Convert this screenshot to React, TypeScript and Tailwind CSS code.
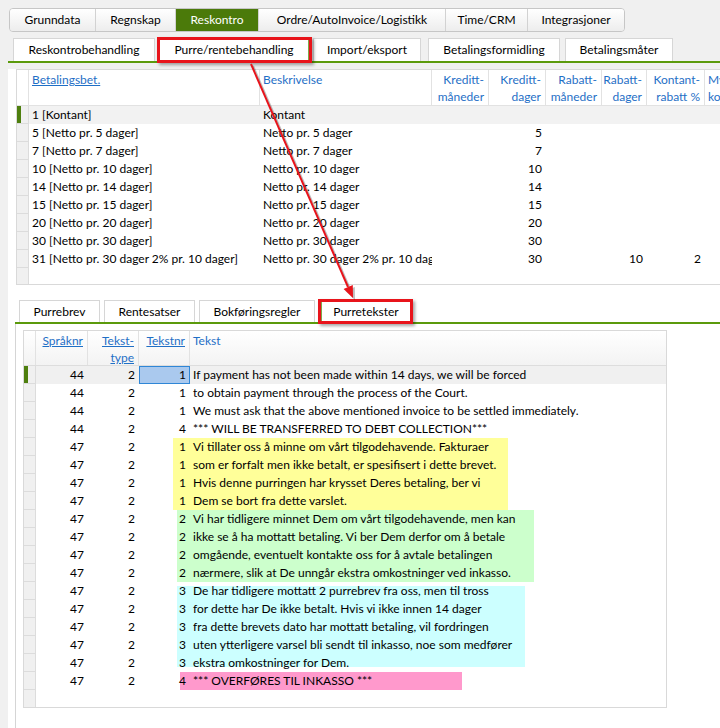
import clsx from "clsx";

const topTabs = [
  { label: "Grunndata", w: "w-[85px]" },
  { label: "Regnskap", w: "w-[80px]" },
  { label: "Reskontro", w: "w-[83px]", active: true },
  { label: "Ordre/AutoInvoice/Logistikk", w: "w-[187px]" },
  { label: "Time/CRM", w: "w-[82px]" },
  { label: "Integrasjoner", w: "w-[97px]" },
];

const subTabs = [
  { label: "Reskontrobehandling", w: "w-[142px]", ml: "" },
  { label: "Purre/rentebehandling", w: "w-[150px]", ml: "ml-1", active: true },
  { label: "Import/eksport", w: "w-[108px]", ml: "ml-1" },
  { label: "Betalingsformidling", w: "w-[132px]", ml: "ml-[7px]" },
  { label: "Betalingsmåter", w: "w-[108px]", ml: "ml-[5px]" },
];

const lowerTabs = [
  { label: "Purrebrev", w: "w-[81px]", ml: "" },
  { label: "Rentesatser", w: "w-[91px]", ml: "ml-1" },
  { label: "Bokføringsregler", w: "w-[116px]", ml: "ml-1" },
  { label: "Purretekster", w: "w-[90px]", ml: "ml-[6px]", active: true },
];

const payCols = [
  { l: ["Betalingsbet."], w: "w-[231px]", right: false, link: true },
  { l: ["Beskrivelse"], w: "w-[172px]", right: false },
  { l: ["Kreditt-", "måneder"], w: "w-[57px]", right: true },
  { l: ["Kreditt-", "dager"], w: "w-[57px]", right: true },
  { l: ["Rabatt-", "måneder"], w: "w-[56px]", right: true },
  { l: ["Rabatt-", "dager"], w: "w-[45px]", right: true },
  { l: ["Kontant-", "rabatt %"], w: "w-[58px]", right: true },
  { l: ["Mva-", "kode"], w: "w-[60px]", right: false },
];

const payRows = [
  ["1 [Kontant]", "Kontant", "", "", "", "", "", ""],
  ["5 [Netto pr. 5 dager]", "Netto pr. 5 dager", "", "5", "", "", "", ""],
  ["7 [Netto pr. 7 dager]", "Netto pr. 7 dager", "", "7", "", "", "", ""],
  ["10 [Netto pr. 10 dager]", "Netto pr. 10 dager", "", "10", "", "", "", ""],
  ["14 [Netto pr. 14 dager]", "Netto pr. 14 dager", "", "14", "", "", "", ""],
  ["15 [Netto pr. 15 dager]", "Netto pr. 15 dager", "", "15", "", "", "", ""],
  ["20 [Netto pr. 20 dager]", "Netto pr. 20 dager", "", "20", "", "", "", ""],
  ["30 [Netto pr. 30 dager]", "Netto pr. 30 dager", "", "30", "", "", "", ""],
  ["31 [Netto pr. 30 dager 2% pr. 10 dager]", "Netto pr. 30 dager 2% pr. 10 dager", "", "30", "", "10", "2", ""],
];

const Y = "left-[149px] w-[335px] top-0 bottom-0 bg-[#ffff99]";
const G = "left-[153px] w-[357px] top-0 bottom-0 bg-[#ccffcc]";
const C = "left-[153px] w-[348px] top-0 bottom-0 bg-[#ccffff]";

const textRows = [
  { s: "44", t: "2", n: "1", x: "If payment has not been made within 14 days, we will be forced" },
  { s: "44", t: "2", n: "1", x: "to obtain payment through the process of the Court." },
  { s: "44", t: "2", n: "1", x: "We must ask that the above mentioned invoice to be settled immediately." },
  { s: "44", t: "2", n: "4", x: "*** WILL BE TRANSFERRED TO DEBT COLLECTION***" },
  { s: "47", t: "2", n: "1", x: "Vi tillater oss å minne om vårt tilgodehavende. Fakturaer", hl: Y },
  { s: "47", t: "2", n: "1", x: "som er forfalt men ikke betalt, er spesifisert i dette brevet.", hl: Y },
  { s: "47", t: "2", n: "1", x: "Hvis denne purringen har krysset Deres betaling, ber vi", hl: Y },
  { s: "47", t: "2", n: "1", x: "Dem se bort fra dette varslet.", hl: Y },
  { s: "47", t: "2", n: "2", x: "Vi har tidligere minnet Dem om vårt tilgodehavende, men kan", hl: G },
  { s: "47", t: "2", n: "2", x: "ikke se å ha mottatt betaling. Vi ber Dem derfor om å betale", hl: G },
  { s: "47", t: "2", n: "2", x: "omgående, eventuelt kontakte oss for å avtale betalingen", hl: G },
  { s: "47", t: "2", n: "2", x: "nærmere, slik at De unngår ekstra omkostninger ved inkasso.", hl: G },
  { s: "47", t: "2", n: "3", x: "De har tidligere mottatt 2 purrebrev fra oss, men til tross", hl: "left-[153px] w-[348px] top-[4px] bottom-0 bg-[#ccffff]" },
  { s: "47", t: "2", n: "3", x: "for dette har De ikke betalt. Hvis vi ikke innen 14 dager", hl: C },
  { s: "47", t: "2", n: "3", x: "fra dette brevets dato har mottatt betaling, vil fordringen", hl: C },
  { s: "47", t: "2", n: "3", x: "uten ytterligere varsel bli sendt til inkasso, noe som medfører", hl: C },
  { s: "47", t: "2", n: "3", x: "ekstra omkostninger for Dem.", hl: "left-[153px] w-[348px] top-0 bottom-[5px] bg-[#ccffff]" },
  { s: "47", t: "2", n: "4", x: "*** OVERFØRES TIL INKASSO ***", hl: "left-[156px] w-[282px] top-0 bottom-0 bg-[#ff99cc]" },
];

function TopTabs() {
  return (
    <div className="flex pl-[9px] pt-2">
      <div className="flex h-6 overflow-hidden rounded-[4px] border border-[#c6c6c6]">
        {topTabs.map((t, i) => (
          <div
            key={t.label}
            className={clsx(
              "flex items-center justify-center",
              t.w,
              i > 0 && "border-l border-[#d2d2d2]",
              t.active ? "bg-[#4b7a0a] text-white" : "bg-gradient-to-b from-white to-[#ededed]"
            )}
          >
            {t.label}
          </div>
        ))}
      </div>
    </div>
  );
}

function TabRow({ tabs, h }: { tabs: typeof subTabs; h: string }) {
  return (
    <div className="flex">
      {tabs.map((t) => (
        <div
          key={t.label}
          className={clsx(
            "flex items-center justify-center border-x border-t bg-white",
            t.w,
            t.ml,
            h,
            t.active ? "border-[#7ea84a]" : "border-[#d6d6d6]"
          )}
        >
          {t.label}
        </div>
      ))}
    </div>
  );
}

function PaymentGrid() {
  return (
    <div className="ml-2 mt-[6px] flex h-[216px] w-[720px] flex-col border border-[#d9d9d9]">
      <div className="flex h-9 border-b border-[#e2e2e2]">
        <div className="w-3 shrink-0 border-r border-[#e2e2e2]" />
        {payCols.map((c) => (
          <div
            key={c.l[0]}
            className={clsx(
              "shrink-0 border-r border-[#e2e2e2] pt-[1px] leading-[17px] text-[#1f6fc6]",
              c.w,
              c.right ? "pr-1 text-right" : "pl-[3px]"
            )}
          >
            {c.l.map((s) => (
              <div key={s} className={clsx("whitespace-nowrap", c.link && "underline")}>
                {s}
              </div>
            ))}
          </div>
        ))}
      </div>
      {payRows.map((r, i) => (
        <div key={r[0]} className={clsx("flex h-[18px] leading-[18px]", i === 0 && "bg-[#f2f2f2]")}>
          <div className="flex w-3 shrink-0 border-r border-b border-[#dcdcdc] bg-[#f0f0f0]">
            {i === 0 && <div className="w-1 bg-[#4e7f0e]" />}
          </div>
          {r.map((v, j) => (
            <div
              key={j}
              className={clsx(
                "shrink-0 overflow-hidden whitespace-nowrap",
                payCols[j].w,
                payCols[j].right ? "pr-1 text-right" : "pl-[3px]",
                j === 1 && "pr-1"
              )}
            >
              {v}
            </div>
          ))}
        </div>
      ))}
      <div className="flex flex-1">
        <div className="w-3 shrink-0 border-r border-[#dcdcdc] bg-[#f0f0f0]" />
      </div>
    </div>
  );
}

function TextGrid() {
  return (
    <div className="flex h-[378px] w-[644px] flex-col border border-[#d9d9d9]">
      <div className="flex h-[35px] border-b border-[#dddddd] bg-gradient-to-b from-white to-[#f3f3f3] leading-[17px] text-[#1f6fc6]">
        <div className="w-3 shrink-0 border-r border-[#e2e2e2]" />
        <div className="w-[52px] shrink-0 border-r border-[#e2e2e2] pr-1 pt-[1px] text-right underline">Språknr</div>
        <div className="w-[51px] shrink-0 border-r border-[#e2e2e2] pr-1 pt-[1px] text-right underline">
          <div>Tekst-</div>
          <div>type</div>
        </div>
        <div className="w-[51px] shrink-0 border-r border-[#e2e2e2] pr-1 pt-[1px] text-right underline">Tekstnr</div>
        <div className="pl-[3px] pt-[1px]">Tekst</div>
      </div>
      {textRows.map((r, i) => (
        <div key={i} className={clsx("relative flex h-[18px] leading-[18px]", i === 0 && "bg-[#f0f0f0]")}>
          {r.hl && <div className={clsx("absolute", r.hl)} />}
          <div className="relative flex w-3 shrink-0 border-r border-b border-[#dcdcdc] bg-[#f0f0f0]">
            {i === 0 && <div className="w-1 bg-[#4e7f0e]" />}
          </div>
          <div className="relative w-[52px] shrink-0 pr-1 text-right">{r.s}</div>
          <div className="relative w-[51px] shrink-0 pr-1 text-right">{r.t}</div>
          <div
            className={clsx(
              "relative w-[51px] shrink-0 text-right",
              i === 0 ? "border border-[#2f86d6] bg-[#aac9ee] pr-[3px] leading-[16px]" : "pr-1"
            )}
          >
            {r.n}
          </div>
          <div className="relative whitespace-nowrap pl-[3px]">{r.x}</div>
        </div>
      ))}
      <div className="flex flex-1">
        <div className="w-3 shrink-0 border-r border-[#dcdcdc] bg-[#f0f0f0]" />
      </div>
    </div>
  );
}

function Annotations() {
  return (
    <>
      <div className="absolute left-[157px] top-[37px] h-[26px] w-[155px] border-[3px] border-[#e8141b] shadow-[2px_2px_3px_rgba(0,0,0,0.35)]" />
      <div className="absolute left-[318px] top-[299px] h-[25px] w-[95px] border-[3px] border-[#e8141b] shadow-[2px_2px_3px_rgba(0,0,0,0.35)]" />
      <svg className="pointer-events-none absolute left-0 top-0" width="720" height="728">
        <g opacity="0.25" transform="translate(2,2)">
          <line x1="251" y1="64" x2="348" y2="287" stroke="#000" strokeWidth="2" />
          <polygon points="353,298 352.8,285 343.6,289" fill="#000" />
        </g>
        <line x1="251" y1="64" x2="348" y2="287" stroke="#e8141b" strokeWidth="2" />
        <polygon points="353,298 352.8,285 343.6,289" fill="#e8141b" />
      </svg>
    </>
  );
}

export default function App() {
  return (
    <div className="relative h-[728px] w-[720px] overflow-hidden bg-[#f0f0f0] font-['Lato',sans-serif] text-[12px] text-black">
      <TopTabs />
      <div className="mt-[6px] pl-[13px]">
        <TabRow tabs={subTabs} h="h-[23px]" />
      </div>
      <div className="ml-2 h-[2px] bg-[#5b9a0c]" />
      <div className="ml-2 h-[665px] bg-white pt-0">
        <PaymentGrid />
        <div className="ml-[7px] mt-[15px]">
          <div className="pl-1">
            <TabRow tabs={lowerTabs} h="h-[22px]" />
          </div>
          <div className="h-[2px] bg-[#5b9a0c]" />
          <div className="h-[420px] border-l border-[#d5d5d5] pl-[7px] pt-[6px]">
            <TextGrid />
          </div>
        </div>
      </div>
      <Annotations />
    </div>
  );
}
